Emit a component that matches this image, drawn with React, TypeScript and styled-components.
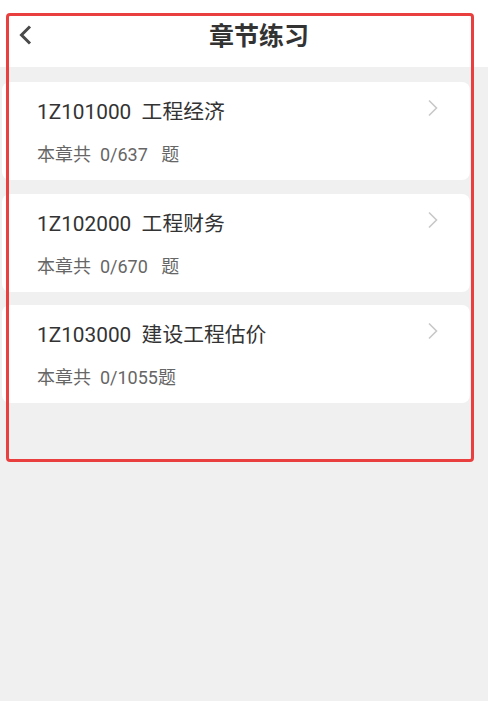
import React from 'react';
import styled, { createGlobalStyle } from 'styled-components';

const GlobalStyle = createGlobalStyle`
  html, body {
    margin: 0;
    padding: 0;
    background: #f0f0f0;
  }
  body {
    font-family: Roboto, "Noto Sans CJK SC", sans-serif;
  }
`;

const Page = styled.div`
  position: relative;
  min-height: 701px;
  background: #f0f0f0;
`;

const Header = styled.header`
  height: 67px;
  background: #fff;
  display: flex;
  align-items: center;
  padding: 0 8px 0 14px;
  box-sizing: border-box;
`;

const BackButton = styled.button`
  width: 24px;
  height: 24px;
  padding: 0;
  margin-top: 3px;
  border: none;
  background: none;
  display: flex;
  align-items: center;
  justify-content: center;
`;

const Title = styled.h1`
  flex: 1;
  margin: 0;
  text-align: center;
  font-size: 25px;
  font-weight: 700;
  color: #333;
  line-height: 30px;
  font-family: "Noto Sans CJK SC", sans-serif;
`;

const List = styled.div`
  display: flex;
  flex-direction: column;
  gap: 13.5px;
  padding: 15px 18px 0 2px;
`;

const Card = styled.div`
  background: #fff;
  border-radius: 8px;
  padding: 18px 31px 13px 35px;
  height: 98px;
  box-sizing: border-box;
  display: flex;
  flex-direction: column;
`;

const TitleRow = styled.div`
  display: flex;
  align-items: flex-start;
  justify-content: space-between;
`;

const CardTitle = styled.div`
  font-size: 20.8px;
  line-height: 24px;
  color: #333;
  white-space: pre;
`;

const Chevron = styled.svg`
  margin-top: -1px;
  flex-shrink: 0;
`;

const Count = styled.div`
  margin-top: 20px;
  font-size: 18px;
  line-height: 22px;
  color: #666;
  white-space: pre;
`;

const Frame = styled.div`
  position: absolute;
  left: 6px;
  top: 13px;
  width: 468px;
  height: 449px;
  box-sizing: border-box;
  border: 3px solid #e9403f;
  border-radius: 4px;
  pointer-events: none;
`;

const chapters = [
  { code: '1Z101000', name: '工程经济', count: '本章共  0/637   题' },
  { code: '1Z102000', name: '工程财务', count: '本章共  0/670   题' },
  { code: '1Z103000', name: '建设工程估价', count: '本章共  0/1055题' },
];

export default function App() {
  return (
    <Page>
      <GlobalStyle />
      <Header>
        <BackButton aria-label="返回">
          <svg width="24" height="24" viewBox="0 0 24 24">
            <polyline
              points="16,3.5 7.5,12 16,20.5"
              fill="none"
              stroke="#4a4a4a"
              strokeWidth="3"
            />
          </svg>
        </BackButton>
        <Title>章节练习</Title>
      </Header>
      <List>
        {chapters.map((c) => (
          <Card key={c.code}>
            <TitleRow>
              <CardTitle>{`${c.code}  ${c.name}`}</CardTitle>
              <Chevron width="12" height="18" viewBox="0 0 12 18">
                <polyline
                  points="2,1.5 9.5,9 2,16.5"
                  fill="none"
                  stroke="#c8c8c8"
                  strokeWidth="1.6"
                />
              </Chevron>
            </TitleRow>
            <Count>{c.count}</Count>
          </Card>
        ))}
      </List>
      <Frame />
    </Page>
  );
}
